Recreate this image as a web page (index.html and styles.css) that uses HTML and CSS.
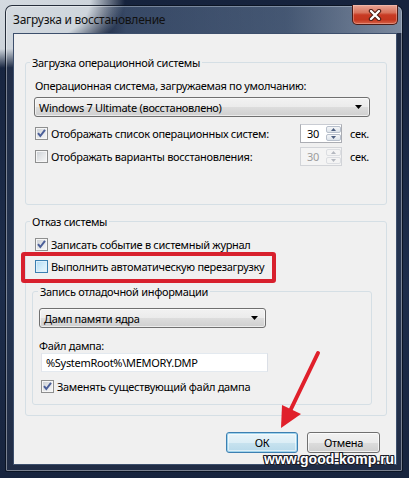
FILE: index.html
```html
<!DOCTYPE html>
<html lang="ru">
<head>
    <meta charset="UTF-8">
    <meta name="viewport" content="width=device-width, initial-scale=1.0">
    <title>Загрузка и восстановление</title>
    <link rel="stylesheet" href="styles.css">
</head>
<body>
    <div class="window">
        <div class="titlebar">
            <span class="title">Загрузка и восстановление</span>
            <button class="close-btn" aria-label="Закрыть">
                <svg width="14" height="12" viewBox="0 0 14 12">
                    <path d="M3 2 L11 10 M11 2 L3 10" stroke="#4a1a12" stroke-width="4.4" stroke-linecap="round"/>
                    <path d="M3 2 L11 10 M11 2 L3 10" stroke="#fff" stroke-width="2.4" stroke-linecap="round"/>
                </svg>
            </button>
        </div>

        <div class="content">
            <fieldset class="group">
                <legend>Загрузка операционной системы</legend>
                <div class="label label-os">Операционная система, загружаемая по умолчанию:</div>
                <div class="select select-os">
                    <span>Windows 7 Ultimate (восстановлено)</span>
                    <svg class="arrow" width="7" height="4" viewBox="0 0 7 4"><path d="M0 0H7L3.5 4Z"/></svg>
                </div>
                <div class="row row-first">
                    <label class="check check-wide">
                        <span class="box"><svg width="11" height="11" viewBox="0 0 11 11"><path d="M2 5.2 L4.3 8 L9 1.8" fill="none" stroke="#4b5f99" stroke-width="2"/></svg></span>
                        Отображать список операционных систем:
                    </label>
                    <div class="spin">
                        <span class="spin-val">30</span>
                        <span class="spin-btns">
                            <i class="spin-up"><svg width="5" height="3" viewBox="0 0 5 3"><path d="M0 3H5L2.5 0Z"/></svg></i>
                            <i class="spin-down"><svg width="5" height="3" viewBox="0 0 5 3"><path d="M0 0H5L2.5 3Z"/></svg></i>
                        </span>
                    </div>
                    <span class="unit">сек.</span>
                </div>
                <div class="row">
                    <label class="check check-wide">
                        <span class="box"></span>
                        Отображать варианты восстановления:
                    </label>
                    <div class="spin disabled">
                        <span class="spin-val">30</span>
                        <span class="spin-btns">
                            <i class="spin-up"><svg width="5" height="3" viewBox="0 0 5 3"><path d="M0 3H5L2.5 0Z"/></svg></i>
                            <i class="spin-down"><svg width="5" height="3" viewBox="0 0 5 3"><path d="M0 0H5L2.5 3Z"/></svg></i>
                        </span>
                    </div>
                    <span class="unit">сек.</span>
                </div>
            </fieldset>

            <fieldset class="group group-fail">
                <legend>Отказ системы</legend>
                <label class="check line check-log">
                    <span class="box"><svg width="11" height="11" viewBox="0 0 11 11"><path d="M2 5.2 L4.3 8 L9 1.8" fill="none" stroke="#4b5f99" stroke-width="2"/></svg></span>
                    Записать событие в системный журнал
                </label>
                <label class="check line check-reboot">
                    <span class="box hover"></span>
                    Выполнить автоматическую перезагрузку
                </label>

                <fieldset class="group group-debug">
                    <legend>Запись отладочной информации</legend>
                    <div class="select select-dump">
                        <span>Дамп памяти ядра</span>
                        <svg class="arrow" width="7" height="4" viewBox="0 0 7 4"><path d="M0 0H7L3.5 4Z"/></svg>
                    </div>
                    <div class="label label-file">Файл дампа:</div>
                    <div class="textbox">%SystemRoot%\MEMORY.DMP</div>
                    <label class="check line check-replace">
                        <span class="box"><svg width="11" height="11" viewBox="0 0 11 11"><path d="M2 5.2 L4.3 8 L9 1.8" fill="none" stroke="#4b5f99" stroke-width="2"/></svg></span>
                        Заменять существующий файл дампа
                    </label>
                </fieldset>
            </fieldset>

            <div class="buttons">
                <button class="btn btn-default">ОК</button>
                <button class="btn">Отмена</button>
            </div>
        </div>
    </div>

    <!-- annotations on top of the screenshot -->
    <div class="highlight"></div>
    <svg class="pointer" width="409" height="478" viewBox="0 0 409 478">
        <path d="M318 353 L291 409" stroke="#e0202b" stroke-width="4" stroke-linecap="round"/>
        <path d="M282 405 L301 414 L281 428 Z" fill="#e0202b"/>
    </svg>
    <div class="watermark">www.good-komp.ru</div>
</body>
</html>
```

FILE: styles.css
```css
* {
    box-sizing: border-box;
}
body {
    margin: 0;
    width: 409px;
    height: 478px;
    overflow: hidden;
    position: relative;
    padding: 5px 6px 0 5px;
    font-family: "Noto Sans", Arial, sans-serif;
    font-size: 11px;
    letter-spacing: -0.3px;
    color: #000;
    background:
        radial-gradient(125px 68px at 0 0, #d4dae0 0, #cdd4db 72%, rgba(205,212,219,0) 100%),
        linear-gradient(to bottom, #16233d, #1d2d4b 60%, #17243e);
}
.window {
    width: 398px;
    height: 467px;
    border: 1px solid rgba(8,16,30,0.85);
    border-radius: 7px 7px 2px 2px;
    padding: 0 5px 6px 7px;
    background: rgba(255,255,255,0.04);
    box-shadow: inset 0 0 0 1px rgba(255,255,255,0.4);
}
.titlebar {
    height: 27px;
    display: flex;
    justify-content: space-between;
    align-items: flex-start;
    margin: 0 -5px 0 -7px;
    padding: 0 4px 0 7px;
    background: linear-gradient(to right, rgba(255,255,255,0) 0, rgba(255,255,255,0) 95px, rgba(110,140,178,0.3) 120px, rgba(130,158,190,0.38) 280px, rgba(185,200,218,0.6) 396px);
    border-radius: 6px 6px 0 0;
}
.title {
    padding-top: 6px;
    line-height: 15px;
    font-size: 12px;
    letter-spacing: -0.25px;
    color: #111;
}
.close-btn {
    width: 46px;
    height: 20px;
    margin-top: -1px;
    padding: 0;
    border: 1px solid #4c1a14;
    border-top: none;
    border-radius: 0 0 5px 5px;
    background: linear-gradient(to bottom, #e8a595 0, #d8735c 40%, #c83b24 52%, #c4371f 78%, #d6634a 100%);
    box-shadow: inset 0 0 0 1px rgba(255,220,210,0.35);
    display: flex;
    align-items: center;
    justify-content: center;
}
.content {
    height: 432px;
    background: #f0f0f0;
    border: 1px solid #3d4f6c;
    padding: 21px 9px 0 11px;
}
.group {
    margin: 0;
    min-width: 0;
    border: 1px solid #d5dfe5;
    border-radius: 3px;
    padding: 0 14px 38px 9px;
}
.group legend {
    padding: 0 2px;
    margin-left: -5px;
    line-height: 15px;
}
.group-fail {
    margin-top: 9px;
    padding-bottom: 10px;
}
.group-debug {
    margin: 9px 0 0 -3px;
    padding: 0 6px 9px 6px;
}
.group-debug legend {
    margin-left: -1px;
}
.label {
    line-height: 15px;
}
.label-os {
    margin-top: 8px;
}
.label-file {
    margin-top: 11px;
    line-height: 14px;
}
.select {
    height: 20px;
    display: flex;
    align-items: center;
    justify-content: space-between;
    padding: 0 7px 0 4px;
    border: 1px solid #707070;
    border-radius: 3px;
    background: linear-gradient(to bottom, #f2f2f2 0, #ebebeb 50%, #dddddd 50%, #cfcfcf 100%);
    box-shadow: inset 0 0 0 1px rgba(255,255,255,0.6);
}
.select-os {
    width: 336px;
    margin: 4px 0 0 -1px;
}
.select-dump {
    width: 227px;
    margin-top: 9px;
}
.arrow {
    fill: #000;
}
.textbox {
    width: 227px;
    height: 19px;
    margin-left: 2px;
    padding-left: 4px;
    line-height: 17px;
    background: #fff;
    border: 1px solid #abadb3;
    border-top-color: #e3e9ef;
    border-left-color: #e2e3ea;
    border-right-color: #dbdfe6;
    border-bottom-color: #e3e9ef;
}
.row {
    height: 20px;
    display: flex;
    align-items: center;
    margin-top: 3px;
}
.row-first {
    margin-top: 6px;
}
.check {
    display: flex;
    align-items: center;
    gap: 3px;
}
.check-wide {
    width: 265px;
}
.line {
    line-height: 17px;
}
.check-log {
    margin-top: 7px;
}
.check-reboot {
    margin-top: 5px;
}
.check-replace {
    margin: 6px 0 0 2px;
}
.box {
    width: 13px;
    height: 13px;
    flex: none;
    display: flex;
    align-items: center;
    justify-content: center;
    border: 1px solid #8e8f8f;
    background: linear-gradient(135deg, #c9cdd3 0, #e4e6e8 50%, #f8f8f8 100%);
    box-shadow: inset 0 0 0 1px #f6f6f6;
}
.box.hover {
    border-color: #3c7fb1;
    background: linear-gradient(135deg, #b1dbf4 0, #d7eefb 60%, #eaf6fd 100%);
    box-shadow: inset 0 0 0 1px #def0fb;
}
.spin {
    height: 19px;
    width: 42px;
    display: flex;
    border: 1px solid #abadb3;
    border-top-color: #c9ccd3;
    background: #fff;
}
.spin-val {
    flex: 1;
    padding-left: 6px;
    line-height: 17px;
}
.spin-btns {
    width: 16px;
    display: flex;
    flex-direction: column;
    gap: 1px;
    padding: 1px 0 1px 1px;
}
.spin-btns i {
    flex: 1;
    display: flex;
    align-items: center;
    justify-content: center;
    border: 1px solid #b8c0cc;
    border-radius: 2px;
    background: linear-gradient(to bottom, #f4f6f8, #dde3ea);
    fill: #4d5f80;
}
.spin.disabled {
    border-color: #d2d4d8;
    background: #f4f4f4;
    color: #9c9c9c;
}
.spin.disabled .spin-btns i {
    border-color: #dcdee2;
    background: #f4f4f4;
    fill: #b4b8bf;
}
.unit {
    margin-left: 8px;
}
.buttons {
    display: flex;
    justify-content: flex-end;
    gap: 9px;
    margin: 16px 7px 0 0;
}
.btn {
    width: 73px;
    height: 21px;
    padding: 0;
    font-family: inherit;
    font-size: inherit;
    letter-spacing: inherit;
    color: #000;
    border: 1px solid #707070;
    border-radius: 3px;
    background: linear-gradient(to bottom, #f2f2f2 0, #ebebeb 50%, #dddddd 50%, #cfcfcf 100%);
    box-shadow: inset 0 0 0 1px rgba(255,255,255,0.7);
}
.btn-default {
    width: 72px;
    border-color: #3c7fb1;
    background: linear-gradient(to bottom, #eaf4f9 0, #dceef6 50%, #c8e3ef 50%, #b7d9ea 100%);
    box-shadow: inset 0 0 0 1px #9fd3ec, inset 0 0 0 2px rgba(255,255,255,0.5);
}
.highlight {
    position: absolute;
    left: 21px;
    top: 252px;
    width: 255px;
    height: 31px;
    border: 4px solid #d8202d;
    border-radius: 3px;
}
.pointer {
    position: absolute;
    left: 0;
    top: 0;
}
.watermark {
    position: absolute;
    left: 264px;
    top: 452px;
    font-family: "Liberation Sans", Arial, sans-serif;
    font-weight: bold;
    font-size: 14px;
    line-height: 14px;
    letter-spacing: 0;
    color: #fff;
    text-shadow: 1px 0 0 #1a1c28, -1px 0 0 #1a1c28, 0 1px 0 #1a1c28, 0 -1px 0 #1a1c28,
        1px 1px 0 #1a1c28, -1px -1px 0 #1a1c28, 1px -1px 0 #1a1c28, -1px 1px 0 #1a1c28;
}
```
